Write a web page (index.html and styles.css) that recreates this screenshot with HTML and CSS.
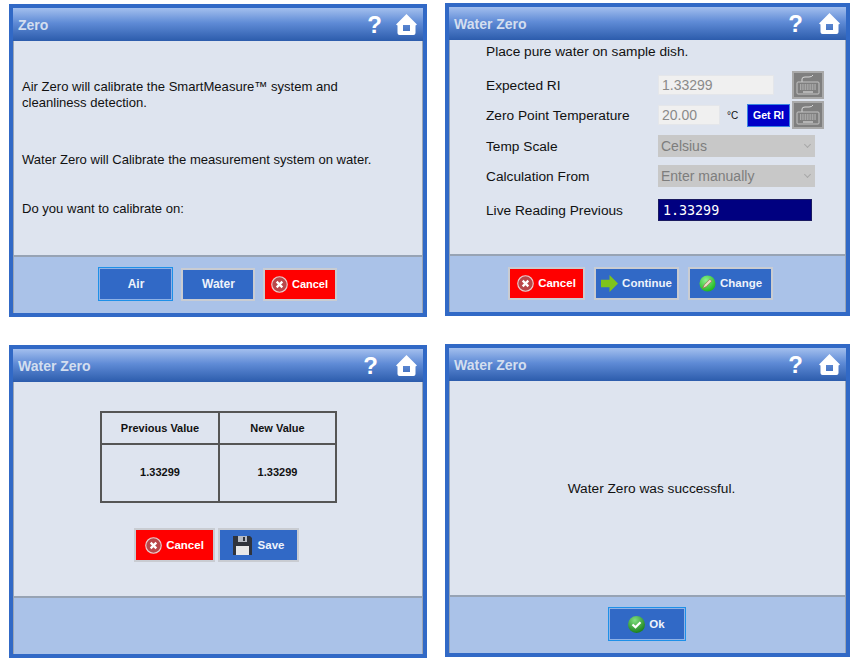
FILE: index.html
```html
<!DOCTYPE html>
<html lang="en">
<head>
  <meta charset="UTF-8">
  <title>Zero Calibration</title>
  <link rel="stylesheet" href="styles.css">
</head>
<body>

  <svg class="icon-defs" width="0" height="0">
    <defs>
      <radialGradient id="g-ok" cx="40%" cy="25%" r="80%">
        <stop offset="0" stop-color="#7fe07f"/>
        <stop offset="1" stop-color="#157a15"/>
      </radialGradient>
      <radialGradient id="g-change" cx="40%" cy="30%" r="80%">
        <stop offset="0" stop-color="#8ff08f"/>
        <stop offset="1" stop-color="#10b010"/>
      </radialGradient>
      <symbol id="i-home" viewBox="0 0 21 21">
        <path fill="#fff" fill-rule="evenodd" d="M10.5 0 21 10.5 19.5 11.5V19q0 2-2 2h-14q-2 0-2-2v-7.5L0 10.5ZM7 11v6h7v-6Z"/>
      </symbol>
      <symbol id="i-cancel" viewBox="0 0 18 18">
        <circle cx="9" cy="9" r="8.2" fill="#b9474a" stroke="#e8d0d0" stroke-width="1.2"/>
        <path d="M6 6l6 6M12 6l-6 6" stroke="#fff" stroke-width="2.4"/>
      </symbol>
      <symbol id="i-arrow" viewBox="0 0 18 18">
        <path fill="#7fc31c" d="M0 5h9V0l9 9-9 9v-5H0Z"/>
      </symbol>
      <symbol id="i-change" viewBox="0 0 18 18">
        <circle cx="9" cy="9" r="8.5" fill="url(#g-change)"/>
        <path d="M4 14l1.5-3.5 6-6 2 2-6 6Z" fill="#eadfc8" stroke="#a8604a" stroke-width=".7"/>
      </symbol>
      <symbol id="i-save" viewBox="0 0 19 19">
        <path fill="#30343c" d="M0 0h17l2 2v17H0Z"/>
        <path fill="#e8e8e8" d="M3 10h13v9H3Z"/>
        <path fill="#b8bcc4" d="M5 0h9v6H5Z"/>
        <path fill="#30343c" d="M10 1h2v4h-2Z"/>
      </symbol>
      <symbol id="i-ok" viewBox="0 0 17 17">
        <circle cx="8.5" cy="8.5" r="8.5" fill="url(#g-ok)"/>
        <path d="M4.5 8.5l3 2.8 5-5" fill="none" stroke="#fff" stroke-width="2.2"/>
      </symbol>
      <symbol id="i-keyboard" viewBox="0 0 32 28">
        <rect width="32" height="28" fill="#a9a9a9"/>
        <rect x="2" y="2" width="28" height="24" fill="#7f7f7f"/>
        <path d="M10 11V8q0-2 3-2h4q3 0 4-2" fill="none" stroke="#d8d8d8" stroke-width="1"/>
        <rect x="5" y="11" width="22" height="12" rx="1" fill="none" stroke="#c4c4c4"/>
        <path d="M8 14h16M8 16h16M8 18h16" stroke="#d8d8d8" stroke-width="1.2" stroke-dasharray="1 .7"/>
        <path d="M11 21h10" stroke="#d8d8d8" stroke-width="1.2"/>
      </symbol>
    </defs>
  </svg>

  <div class="column column-left">

    <section class="panel">
      <header class="panel-head head-tight">
        <span class="panel-title">Zero</span>
        <span class="help">?</span>
        <svg class="home"><use href="#i-home"/></svg>
      </header>
      <div class="panel-body intro">
        <p>Air Zero will calibrate the SmartMeasure™ system and<br>cleanliness detection.</p>
        <p>Water Zero will Calibrate the measurement system on water.</p>
        <p>Do you want to calibrate on:</p>
      </div>
      <footer class="panel-foot foot-small">
        <button class="btn btn-focus btn-plain">Air</button>
        <button class="btn btn-plain">Water</button>
        <button class="btn btn-red"><svg class="btn-icon"><use href="#i-cancel"/></svg>Cancel</button>
      </footer>
    </section>

    <section class="panel">
      <header class="panel-head head-wide">
        <span class="panel-title">Water Zero</span>
        <span class="help">?</span>
        <svg class="home"><use href="#i-home"/></svg>
      </header>
      <div class="panel-body result">
        <table class="values">
          <tr><th class="first-col">Previous Value</th><th>New Value</th></tr>
          <tr><td class="first-col">1.33299</td><td>1.33299</td></tr>
        </table>
        <div class="result-actions">
          <button class="btn btn-red btn-result"><svg class="btn-icon"><use href="#i-cancel"/></svg>Cancel</button>
          <button class="btn btn-result"><svg class="btn-icon icon-save"><use href="#i-save"/></svg>Save</button>
        </div>
      </div>
      <footer class="panel-foot"></footer>
    </section>

  </div>

  <div class="column column-right">

    <section class="panel panel-narrow">
      <header class="panel-head">
        <span class="panel-title">Water Zero</span>
        <span class="help">?</span>
        <svg class="home"><use href="#i-home"/></svg>
      </header>
      <div class="panel-body setup">
        <p class="setup-note">Place pure water on sample dish.</p>
        <div class="row">
          <label>Expected RI</label>
          <input class="field field-ri" type="text" value="1.33299" disabled>
          <svg class="keyboard key-ri"><use href="#i-keyboard"/></svg>
        </div>
        <div class="row">
          <label>Zero Point Temperature</label>
          <input class="field field-temp" type="text" value="20.00" disabled>
          <span class="unit">°C</span>
          <button class="get-ri">Get RI</button>
          <svg class="keyboard"><use href="#i-keyboard"/></svg>
        </div>
        <div class="row row-select">
          <label>Temp Scale</label>
          <div class="select">Celsius<span class="caret"></span></div>
        </div>
        <div class="row">
          <label>Calculation From</label>
          <div class="select">Enter manually<span class="caret"></span></div>
        </div>
        <div class="row row-live">
          <label>Live Reading Previous</label>
          <output class="live">1.33299</output>
        </div>
      </div>
      <footer class="panel-foot foot-left">
        <button class="btn btn-red btn-setup-cancel"><svg class="btn-icon"><use href="#i-cancel"/></svg>Cancel</button>
        <button class="btn btn-setup"><svg class="btn-icon"><use href="#i-arrow"/></svg>Continue</button>
        <button class="btn btn-setup"><svg class="btn-icon"><use href="#i-change"/></svg>Change</button>
      </footer>
    </section>

    <section class="panel panel-narrow">
      <header class="panel-head">
        <span class="panel-title">Water Zero</span>
        <span class="help">?</span>
        <svg class="home"><use href="#i-home"/></svg>
      </header>
      <div class="panel-body done">
        <p>Water Zero was successful.</p>
      </div>
      <footer class="panel-foot">
        <button class="btn btn-focus btn-ok"><svg class="btn-icon"><use href="#i-ok"/></svg>Ok</button>
      </footer>
    </section>

  </div>

</body>
</html>
```

FILE: styles.css
```css
* {
  box-sizing: border-box;
}
body {
  margin: 0;
  height: 662px;
  overflow: hidden;
  background: #fff;
  color: #111;
  font-family: "Liberation Sans", Arial, sans-serif;
  font-size: 13.7px;
  display: flex;
  gap: 18px;
  padding-left: 9px;
}
p {
  margin: 0;
}
.icon-defs {
  position: absolute;
}
.column {
  display: flex;
  flex-direction: column;
  gap: 28px;
}
.column-left {
  padding-top: 4px;
}
.column-right {
  padding-top: 3px;
}

/* panel frame */
.panel {
  width: 418px;
  height: 313px;
  border: 4px solid #3169c6;
  display: flex;
  flex-direction: column;
}
.panel-narrow {
  width: 405px;
}
.panel-head {
  height: 33px;
  flex: none;
  display: flex;
  align-items: center;
  gap: 16px;
  padding: 0 6px 0 5px;
  background: linear-gradient(#a3bfee, #5f8bd6 45%, #2c5cac);
}
.head-wide {
  gap: 18px;
}
.head-tight {
  gap: 14px;
}
.panel-title {
  flex: 1;
  color: #d3deef;
  font-size: 14px;
  font-weight: bold;
}
.help {
  color: #fff;
  font-size: 24px;
  font-weight: bold;
  line-height: 1;
}
.home {
  width: 21px;
  height: 21px;
}
.panel-body {
  height: 214px;
  flex: none;
  background: #dee4ef;
  border-left: 1px solid #9aa5b5;
  border-right: 1px solid #9aa5b5;
}
.panel-foot {
  flex: 1;
  display: flex;
  align-items: center;
  justify-content: center;
  gap: 8px;
  padding: 0 2px 2px 0;
  background: #aac2e8;
  border: 1px solid #9aa5b5;
  border-top: 2px solid #97a3b4;
  border-bottom: none;
}
.foot-left {
  justify-content: flex-start;
  gap: 9px;
  padding-left: 58px;
}

/* buttons */
.btn {
  width: 74px;
  height: 33px;
  padding: 0;
  border: 2px solid #c9ccd2;
  background: #3169c6;
  color: #eef3fb;
  font-family: inherit;
  font-size: 11.5px;
  font-weight: bold;
  display: flex;
  align-items: center;
  justify-content: center;
  gap: 4px;
}
.foot-small .btn {
  font-size: 11px;
}
.foot-small .btn-plain {
  padding-left: 2px;
  font-size: 12px;
}
.btn-red {
  background: #f00;
  color: #fff;
}
.btn-focus {
  border: 1px solid #1e90e8;
  box-shadow: inset 0 0 0 1px #8fb2e6;
  height: 34px;
  width: 75px;
}
.btn-icon {
  width: 17px;
  height: 17px;
  flex: none;
}
.btn-setup-cancel {
  width: 77px;
}
.btn-setup {
  width: 85px;
}
.btn-result {
  width: 81px;
  height: 34px;
}
.icon-save {
  width: 19px;
  height: 19px;
  margin-right: 2px;
}
.btn-ok {
  width: 78px;
}

/* first panel text */
.intro {
  padding: 38px 8px 0;
  font-size: 13.07px;
  line-height: 16px;
}
.intro p + p {
  margin-top: 41px;
}
.intro p:last-child {
  margin-top: 33px;
}

/* setup form */
.setup {
  padding: 4px 0 0 36px;
}
.setup-note {
  line-height: 16px;
  margin-bottom: 10px;
}
.row {
  height: 30px;
  display: flex;
  align-items: center;
}
.row label {
  width: 172px;
  flex: none;
}
.row-select {
  margin-top: 1px;
}
.row-live {
  margin-top: 4px;
}
.field {
  height: 20px;
  padding: 0 3px;
  border: 1px solid #e4e6ea;
  background: #f0f0f0;
  color: #8a8a8a;
  font-family: inherit;
  font-size: 14px;
  opacity: 1;
}
.field-ri {
  width: 116px;
  margin-right: 18px;
}
.field-temp {
  width: 62px;
}
.unit {
  width: 27px;
  padding-left: 7px;
  font-size: 10px;
}
.get-ri {
  width: 43px;
  height: 23px;
  margin-right: 2px;
  padding: 0;
  border: 1px solid #3a86e0;
  background: #0000c8;
  color: #fff;
  font-family: inherit;
  font-size: 10.5px;
  font-weight: bold;
}
.keyboard {
  width: 32px;
  height: 28px;
  flex: none;
}
.select {
  width: 157px;
  height: 22px;
  padding-left: 3px;
  background: #c8c8c8;
  color: #7d7d7d;
  font-size: 14px;
  line-height: 22px;
  position: relative;
}
.caret {
  position: absolute;
  right: 5px;
  top: 7px;
  width: 5px;
  height: 5px;
  border-right: 1px solid #a8a8a8;
  border-bottom: 1px solid #a8a8a8;
  transform: rotate(45deg);
}
.live {
  width: 154px;
  height: 22px;
  padding-left: 4px;
  background: #000080;
  border: 1px solid #1a1a60;
  color: #fff;
  font-family: "DejaVu Sans Mono", monospace;
  font-size: 13.33px;
  line-height: 21px;
}

/* result table */
.result {
  padding-top: 29px;
}
.values {
  width: 237px;
  height: 92px;
  margin-left: 86px;
  border-collapse: collapse;
  table-layout: fixed;
  font-size: 11px;
  font-weight: bold;
  text-align: center;
  color: #111;
}
.values th,
.values td {
  border: 2px solid #555;
}
.values .first-col {
  width: 118px;
}
.values th {
  height: 32px;
}
.values td {
  padding-bottom: 4px;
}
.result-actions {
  display: flex;
  gap: 3px;
  margin: 25px 0 0 120px;
}

/* success message */
.done {
  display: flex;
  align-items: center;
  justify-content: center;
  padding: 1px 0 0 8px;
}
```
